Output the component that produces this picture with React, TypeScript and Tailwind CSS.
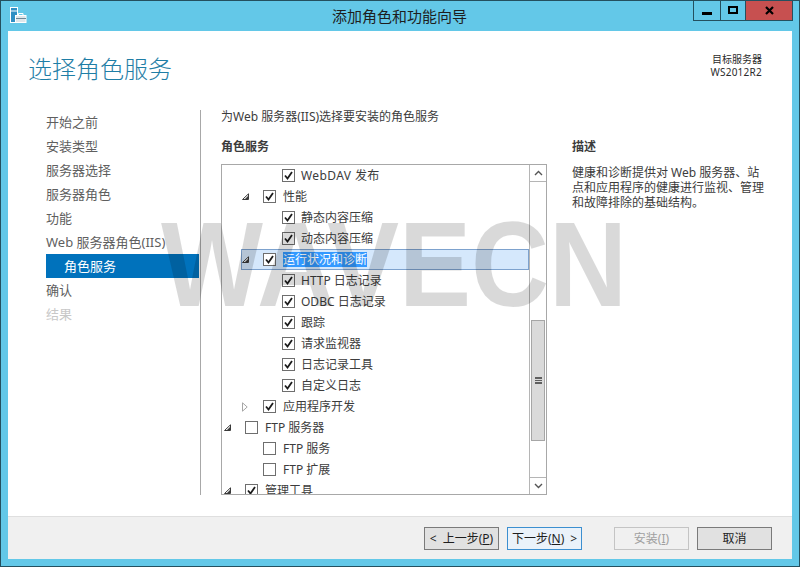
const font = "font-['Noto_Sans','Noto_Sans_CJK_SC',sans-serif]";

const navItems = [
  { label: "开始之前" },
  { label: "安装类型" },
  { label: "服务器选择" },
  { label: "服务器角色" },
  { label: "功能" },
  { label: "Web 服务器角色(IIS)" },
  { label: "角色服务", active: true },
  { label: "确认" },
  { label: "结果", disabled: true },
];

type Row = {
  label: string;
  level: number;
  checked: boolean;
  expander?: "open" | "closed";
  selected?: boolean;
  wide?: boolean;
};

const rows: Row[] = [
  { label: "WebDAV 发布", level: 2, checked: true, wide: true },
  { label: "性能", level: 1, checked: true, expander: "open" },
  { label: "静态内容压缩", level: 2, checked: true },
  { label: "动态内容压缩", level: 2, checked: true },
  { label: "运行状况和诊断", level: 1, checked: true, expander: "open", selected: true },
  { label: "HTTP 日志记录", level: 2, checked: true },
  { label: "ODBC 日志记录", level: 2, checked: true },
  { label: "跟踪", level: 2, checked: true },
  { label: "请求监视器", level: 2, checked: true },
  { label: "日志记录工具", level: 2, checked: true },
  { label: "自定义日志", level: 2, checked: true },
  { label: "应用程序开发", level: 1, checked: true, expander: "closed" },
  { label: "FTP 服务器", level: 0, checked: false, expander: "open" },
  { label: "FTP 服务", level: 1, checked: false },
  { label: "FTP 扩展", level: 1, checked: false },
  { label: "管理工具", level: 0, checked: true, expander: "open" },
];

const AppIcon = () => (
  <svg width="17" height="17" viewBox="0 0 17 17" fill="none">
    <rect x="0.5" y="0.5" width="7" height="15" fill="#2f8fc4" stroke="#fff" />
    <rect x="1" y="3.5" width="6" height="1" fill="#fff" />
    <rect x="5.5" y="8.5" width="10.5" height="7" fill="#dfe6ea" stroke="#fff" />
    <path d="M8.5 8.5V6.5H13V8.5" stroke="#fff" />
    <rect x="6" y="11" width="10" height="1" fill="#6f8796" />
  </svg>
);

const Check = () => (
  <svg width="11" height="11" viewBox="0 0 11 11" fill="none">
    <path d="M2 5.5L4.5 8.5L9 2" stroke="#1c1c1c" strokeWidth="1.8" />
  </svg>
);

const Expander = ({ kind }: { kind: "open" | "closed" }) =>
  kind === "open" ? (
    <svg width="7" height="7" viewBox="0 0 7 7">
      <path d="M0.5 6.5H6.5V0.8Z" fill="#fff" stroke="#3a3a3a" strokeWidth="1" />
      <path d="M3 6H6V3Z" fill="#3a3a3a" />
    </svg>
  ) : (
    <svg width="6" height="10" viewBox="0 0 6 10" fill="none">
      <path d="M0.5 0.8V9.2L5.2 5Z" stroke="#a6a6a6" />
    </svg>
  );

const TreeRow = ({ row }: { row: Row }) => {
  const indent = ["pl-[2px]", "pl-[20px]", "pl-[39px]"][row.level];
  return (
    <div className={`h-[21px] flex items-center ${indent}`}>
      <div
        className={`h-[21px] flex items-center grow ${
          row.selected ? "bg-[#d5e8fc] border border-[#7da2ce] -ml-[1px]" : ""
        }`}
      >
        <span className="w-[21px] shrink-0 flex justify-start">
          {row.expander && <Expander kind={row.expander} />}
        </span>
        <span className="w-[13px] h-[13px] shrink-0 border border-[#6e6e6e] bg-white flex items-center justify-center">
          {row.checked && <Check />}
        </span>
        <span
          className={`leading-[15px] text-[12px] whitespace-nowrap ${row.level === 2 ? "ml-[6px]" : "ml-[7px]"} ${
            row.wide ? "tracking-[0.4px]" : ""
          } ${row.selected ? "bg-[#3399ff] text-white" : "text-[#3c3c3c]"}`}
        >
          {row.label}
        </span>
      </div>
    </div>
  );
};

const Scrollbar = () => (
  <div className="w-[17px] shrink-0 border-l border-[#b5b5b5] bg-white flex flex-col">
    <div className="h-[17px] shrink-0 border-b border-[#b5b5b5] flex items-center justify-center">
      <svg width="9" height="6" viewBox="0 0 9 6" fill="none">
        <path d="M1 5L4.5 1.5L8 5" stroke="#555" strokeWidth="1.4" />
      </svg>
    </div>
    <div className="h-[138px] shrink-0" />
    <div className="h-[121px] shrink-0 mx-[1px] bg-[#dadada] border border-[#a6a6a6] flex flex-col gap-[1px] items-center justify-center">
      <div className="w-[7px] h-[1.5px] bg-[#5f5f5f]" />
      <div className="w-[7px] h-[1.5px] bg-[#5f5f5f]" />
      <div className="w-[7px] h-[1.5px] bg-[#5f5f5f]" />
    </div>
    <div className="grow" />
    <div className="h-[17px] shrink-0 border-t border-[#b5b5b5] flex items-center justify-center">
      <svg width="9" height="6" viewBox="0 0 9 6" fill="none">
        <path d="M1 1L4.5 4.5L8 1" stroke="#555" strokeWidth="1.4" />
      </svg>
    </div>
  </div>
);

const Button = ({ children, className }: { children: React.ReactNode; className: string }) => (
  <div className={`w-[75px] h-[23px] border flex items-center justify-center text-[12px] leading-none ${className}`}>
    {children}
  </div>
);

export default function App() {
  return (
    <div className={`relative w-[800px] h-[567px] overflow-hidden bg-[#63c8e8] border border-[#24505f] flex flex-col ${font}`}>
      {/* title bar */}
      <div className="h-[30px] shrink-0 flex">
        <div className="pl-[9px] pt-[6px] w-[331px]">
          <AppIcon />
        </div>
        <div className="w-[361px] text-[15px] text-[#1e1e1e] leading-[30px]">添加角色和功能向导</div>
        <div className="h-[21px] flex border-x border-b border-[#24505f] -mt-[1px]">
          <div className="w-[27px] border-r border-[#24505f] flex items-center justify-center pt-[2px]">
            <div className="w-[10px] h-[3px] mt-[5px] bg-black" />
          </div>
          <div className="w-[25px] border-r border-[#24505f] flex items-center justify-center">
            <div className="w-[10px] h-[8px] border-2 border-black" />
          </div>
          <div className="w-[46px] bg-[#c75050] flex items-center justify-center">
            <svg width="9" height="9" viewBox="0 0 9 9" fill="none">
              <path d="M1 1L8 8M8 1L1 8" stroke="#000" strokeWidth="2.2" />
            </svg>
          </div>
        </div>
      </div>

      {/* client area */}
      <div className="mx-[7px] h-[528px] bg-white flex flex-col">
        <div className="h-[79px] shrink-0 flex justify-between pl-[20px] pr-[30px]">
          <div className="text-[24px] leading-[32px] pt-[22px] text-[#1f7ea6] font-light">选择角色服务</div>
          <div className="pt-[22px] text-right text-[10px] leading-[13px] text-[#2b2b2b]">
            <div>目标服务器</div>
            <div className="tracking-[0.25px]">WS2012R2</div>
          </div>
        </div>

        <div className="h-[385px] shrink-0 flex">
          <div className="w-[192px] shrink-0 pl-[38px] pr-[1px] text-[13px]">
            {navItems.map((n) => (
              <div
                key={n.label}
                className={`h-[24px] leading-[24px] whitespace-nowrap ${
                  n.active
                    ? "pl-[18px] bg-[#0072bc] text-white"
                    : n.disabled
                      ? "text-[#c8c8c8]"
                      : "text-[#5f5f5f]"
                }`}
              >
                {n.label}
              </div>
            ))}
          </div>

          <div className="w-[1px] shrink-0 bg-[#a8a8a8]" />

          <div className="pl-[20px] flex flex-col -mt-[1px]">
            <div className="h-[15px] text-[12px] leading-[15px] text-[#3c3c3c] whitespace-nowrap">
              为Web 服务器(IIS)选择要安装的角色服务
            </div>
            <div className="flex mt-[15px]">
              <div className="w-[351px] shrink-0">
                <div className="h-[25px] text-[12px] leading-[15px] font-bold text-[#3c3c3c]">角色服务</div>
                <div className="w-[326px] h-[331px] border border-[#a8a8a8] flex overflow-hidden">
                  <div className="grow min-w-0 overflow-hidden">
                    {rows.map((r) => (
                      <TreeRow key={r.label} row={r} />
                    ))}
                  </div>
                  <Scrollbar />
                </div>
              </div>
              <div className="w-[196px] text-[12px] text-[#3c3c3c]">
                <div className="h-[26px] leading-[15px] font-bold">描述</div>
                <div className="leading-[15px] whitespace-nowrap">
                  健康和诊断提供对 Web 服务器、站
                  <br />
                  点和应用程序的健康进行监视、管理
                  <br />
                  和故障排除的基础结构。
                </div>
              </div>
            </div>
          </div>
        </div>

        <div className="h-[21px] shrink-0" />

        {/* footer */}
        <div className="grow bg-[#f0f0f0] border-t border-[#dfdfdf] pt-[10px] pl-[416px] flex gap-[8px] items-start">
          <Button className="bg-[#e1e1e1] border-[#7a7a7a] text-[#1e1e1e]">
            <span className="mr-[6px]">&lt;</span>上一步(<span className="underline">P</span>)
          </Button>
          <Button className="bg-[#eaf2fa] border-[#3c8fd0] text-[#1e1e1e]">
            下一步(<span className="underline">N</span>)<span className="ml-[6px]">&gt;</span>
          </Button>
          <Button className="ml-[24px] bg-[#f0f0f0] border-[#c4c4c4] text-[#a0a0a0]">
            安装(<span className="underline">I</span>)
          </Button>
          <Button className="bg-[#e1e1e1] border-[#7a7a7a] text-[#1e1e1e]">取消</Button>
        </div>
      </div>

      {/* watermark */}
      <div className="absolute left-[160px] top-[195px] origin-left scale-x-[0.9] pointer-events-none text-[120px] leading-[137px] font-bold text-black/15 font-['Liberation_Sans',sans-serif] whitespace-nowrap">
        WAVECN
      </div>
    </div>
  );
}
